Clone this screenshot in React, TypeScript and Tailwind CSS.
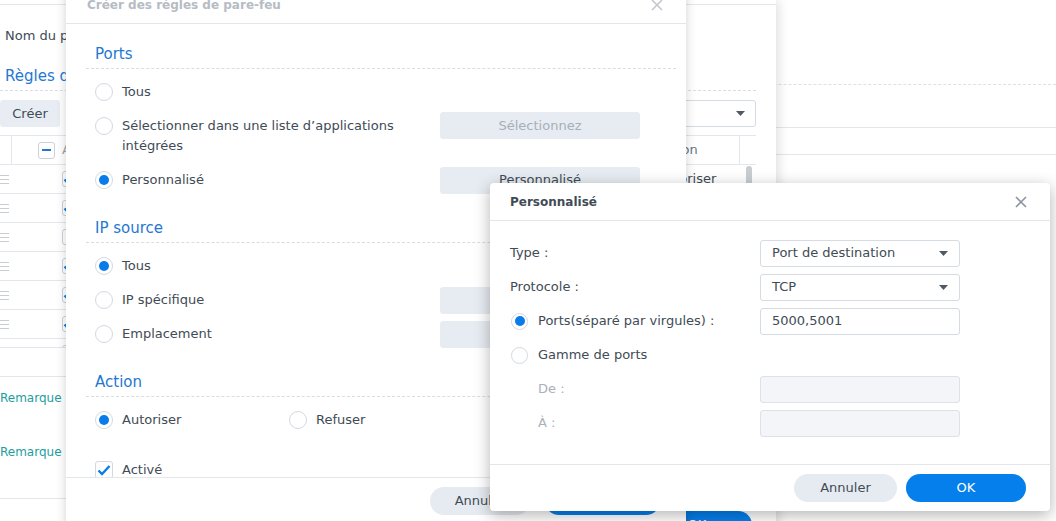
import React from 'react';

const Radio = ({ checked, small }: { checked?: boolean; small?: boolean }) => (
  <span
    className={`flex shrink-0 items-center justify-center rounded-full border border-[#d3d9e0] bg-white ${
      small ? 'w-[17px] h-[17px]' : 'w-[18px] h-[18px]'
    }`}
  >
    {checked && <span className="w-[10px] h-[10px] rounded-full bg-[#0a7ce9]" />}
  </span>
);

const CloseX = ({ color }: { color: string }) => (
  <svg width="12" height="12" viewBox="0 0 12 12">
    <path d="M1 1L11 11M11 1L1 11" stroke={color} strokeWidth="1.7" />
  </svg>
);

const Caret = () => (
  <svg width="9" height="5" viewBox="0 0 9 5">
    <path d="M0 0H9L4.5 5Z" fill="#505a66" />
  </svg>
);

const Check = () => (
  <svg width="14" height="12" viewBox="0 0 14 12">
    <path d="M1.5 6.5L5 10L12.5 2" fill="none" stroke="#0a7ce9" strokeWidth="2.4" />
  </svg>
);

const DragHandle = () => (
  <span className="flex w-[9px] flex-col gap-[3px]">
    <span className="h-px bg-[#c8cdd3]" />
    <span className="h-px bg-[#c8cdd3]" />
    <span className="h-px bg-[#c8cdd3]" />
  </span>
);

// page behind all the windows
const Page = () => (
  <div className="absolute inset-0">
    <div className="h-[85px] border-b border-dashed border-[#dde1e6]" />
    <div className="h-[43px] border-b border-[#e3e6ea]" />
    <div className="h-[27px] border-b border-[#e3e6ea]" />
  </div>
);

const rows = [true, true, false, true, true, true, true];

// firewall profile window (furthest back)
const ProfileDialog = () => (
  <div className="absolute left-[-20px] top-0 h-[580px] w-[796px] bg-white shadow-[3px_0_10px_rgba(0,0,0,0.12)]">
    <div className="h-[5px] border-b border-[#e3e6ea]" />
    <div className="px-[20px]">
      <div className="mt-[21px] pl-[5px] leading-[20px]">Nom du profil</div>
      <div className="mt-[18px] h-[27px] border-b border-dashed border-[#d8dde3] pl-[5px] text-[15px] leading-[24px] text-[#1f78d1]">
        Règles de pare-feu
      </div>
      <div className="mt-[9px] flex h-[27px] justify-between">
        <button className="w-[60px] rounded-[3px] bg-[#e8edf3]">Créer</button>
        <div className="flex w-[220px] items-center justify-end rounded-[3px] border border-[#d5dbe2] pr-[10px]">
          <Caret />
        </div>
      </div>
      <div className="mt-[8px] border-t border-[#e3e6ea]">
        <div className="flex h-[29px] items-center border-b border-[#e3e6ea]">
          <div className="h-full w-[12px] border-r border-[#e3e6ea]" />
          <span className="ml-[26px] flex h-[17px] w-[17px] items-center justify-center rounded-[3px] border border-[#c9d1da] bg-white">
            <span className="h-[2px] w-[9px] bg-[#1f78d1]" />
          </span>
          <span className="ml-[7px] text-[#9aa3ad]">Activé</span>
          <div className="flex-1" />
          <div className="w-[82px] text-[#6b7580]">Action</div>
          <div className="h-full w-[17px] border-l border-[#e3e6ea]" />
        </div>
        <div className="relative h-[183px] overflow-hidden border-b border-[#e3e6ea]">
          {rows.map((on, i) => (
            <div key={i} className="flex h-[29px] items-center border-b border-[#e3e6ea]">
              <DragHandle />
              <span className="ml-[53px] flex h-[16px] w-[16px] items-center justify-center rounded-[3px] border border-[#c9d1da] bg-white">
                {on && <Check />}
              </span>
              <div className="flex-1" />
              <div className="w-[99px]">{i === 0 ? 'Autoriser' : ''}</div>
            </div>
          ))}
          <div className="absolute right-[4px] top-[1px] h-[26px] w-[6px] rounded-full bg-[#c9cdd2]" />
        </div>
        <div className="h-[29px] border-b border-[#e3e6ea]" />
      </div>
      <div className="border-b border-[#e3e6ea] pb-[38px] pt-[13px] text-[12px] leading-[16px] text-[#1d9e9c]">
        <div>Remarque</div>
        <div className="mt-[38px]">Remarque</div>
      </div>
      <div className="mt-[12px] flex justify-end pr-[4px]">
        <button className="h-[28px] w-[110px] rounded-full bg-[#057feb] text-white">OK</button>
      </div>
    </div>
  </div>
);

const Heading = ({ children, first }: { children: React.ReactNode; first?: boolean }) => (
  <div
    className={`flex h-[30px] items-center border-b border-dashed border-[#d8dde3] pl-[9px] pt-[2px] text-[15px] text-[#1f78d1] ${
      first ? 'mt-[15px]' : 'mt-[16px]'
    }`}
  >
    {children}
  </div>
);

const Field = ({ label, checked, button, muted }: { label: string; checked?: boolean; button?: string; muted?: boolean }) => (
  <div className="flex h-[34px] items-center pl-[9px]">
    <div className="flex w-[345px] items-center gap-[9px]">
      <Radio checked={checked} />
      <span>{label}</span>
    </div>
    {button !== undefined && (
      <div
        className={`flex h-[27px] w-[200px] items-center justify-center rounded-[3px] bg-[#e7ecf2] ${
          muted ? 'text-[#a6afb9]' : 'text-[#414b55]'
        }`}
      >
        {button}
      </div>
    )}
  </div>
);

// "Créer des règles de pare-feu"
const RuleDialog = () => (
  <div className="absolute left-[66px] top-[-16px] h-[580px] w-[620px] bg-white shadow-[0_0_10px_rgba(0,0,0,0.18)]">
    <div className="flex h-[40px] items-center justify-between border-b border-[#e3e6ea] pl-[21px] pr-[23px] pt-[2px]">
      <span className="text-[12px] font-bold text-[#b5bcc4]">Créer des règles de pare-feu</span>
      <CloseX color="#c3c9cf" />
    </div>
    <div className="h-[453px] overflow-hidden pl-[20px] pr-[10px]">
      <Heading first>Ports</Heading>
      <div className="mt-[6px]">
        <Field label="Tous" />
        <div className="flex h-[54px] items-start pl-[9px] pt-[3px]">
          <div className="flex w-[345px] items-start gap-[9px] pt-[4px]">
            <span className="pt-[1px]">
              <Radio />
            </span>
            <span className="leading-[20px]">
              Sélectionner dans une liste d’applications
              <br />
              intégrées
            </span>
          </div>
          <div className="flex h-[27px] w-[200px] items-center justify-center rounded-[3px] bg-[#e7ecf2] text-[#a6afb9]">
            Sélectionnez
          </div>
        </div>
        <Field label="Personnalisé" checked button="Personnalisé" />
      </div>
      <Heading>IP source</Heading>
      <div className="mt-[6px]">
        <Field label="Tous" checked />
        <Field label="IP spécifique" button="" muted />
        <Field label="Emplacement" button="" muted />
      </div>
      <Heading>Action</Heading>
      <div className="mt-[6px] flex h-[34px] items-center pl-[9px]">
        <div className="flex w-[194px] items-center gap-[9px]">
          <Radio checked />
          <span>Autoriser</span>
        </div>
        <div className="flex items-center gap-[9px]">
          <Radio />
          <span>Refuser</span>
        </div>
      </div>
      <div className="mt-[16px] flex h-[34px] items-center gap-[9px] pl-[9px]">
        <span className="flex h-[18px] w-[18px] items-center justify-center rounded-[3px] border border-[#d3d9e0] bg-white">
          <Check />
        </span>
        <span>Activé</span>
      </div>
    </div>
    <div className="flex justify-end gap-[15px] border-t border-[#e3e6ea] pr-[26px] pt-[9px]">
      <button className="h-[28px] w-[100px] rounded-full bg-[#e6ebf1]">Annuler</button>
      <button className="h-[28px] w-[115px] rounded-full bg-[#057feb] text-white">OK</button>
    </div>
  </div>
);

const Row = ({ children }: { children: React.ReactNode }) => <div className="flex h-[34px] items-center">{children}</div>;

// "Personnalisé" port dialog (front)
const CustomDialog = () => (
  <div className="absolute left-[490px] top-[183px] h-[328px] w-[560px] rounded-[4px] bg-white shadow-[0_4px_16px_rgba(0,0,0,0.3)]">
    <div className="flex h-[38px] items-center justify-between border-b border-[#e3e6ea] pl-[20px] pr-[23px]">
      <span className="text-[12px] font-bold text-[#414b55]">Personnalisé</span>
      <CloseX color="#8e97a1" />
    </div>
    <div className="h-[243px] pl-[20px] pt-[15px]">
      <Row>
        <div className="w-[250px]">Type :</div>
        <div className="flex h-[27px] w-[200px] items-center justify-between rounded-[3px] border border-[#d5dbe2] pl-[11px] pr-[11px]">
          <span>Port de destination</span>
          <Caret />
        </div>
      </Row>
      <Row>
        <div className="w-[250px]">Protocole :</div>
        <div className="flex h-[27px] w-[200px] items-center justify-between rounded-[3px] border border-[#d5dbe2] pl-[11px] pr-[11px]">
          <span>TCP</span>
          <Caret />
        </div>
      </Row>
      <Row>
        <div className="flex w-[250px] items-center gap-[10px] pl-[1px]">
          <Radio checked small />
          <span>Ports(séparé par virgules) :</span>
        </div>
        <div className="flex h-[27px] w-[200px] items-center rounded-[3px] border border-[#d5dbe2] pl-[11px]">5000,5001</div>
      </Row>
      <Row>
        <div className="flex w-[250px] items-center gap-[10px] pl-[1px]">
          <Radio small />
          <span>Gamme de ports</span>
        </div>
      </Row>
      <Row>
        <div className="w-[250px] pl-[28px] text-[#a9b1ba]">De :</div>
        <div className="h-[27px] w-[200px] rounded-[3px] border border-[#dde2e8] bg-[#f3f5f8]" />
      </Row>
      <Row>
        <div className="w-[250px] pl-[28px] text-[#a9b1ba]">À :</div>
        <div className="h-[27px] w-[200px] rounded-[3px] border border-[#dde2e8] bg-[#f3f5f8]" />
      </Row>
    </div>
    <div className="flex justify-end gap-[9px] border-t border-[#e3e6ea] pr-[24px] pt-[9px]">
      <button className="h-[28px] w-[103px] rounded-full bg-[#e6ebf1]">Annuler</button>
      <button className="h-[28px] w-[120px] rounded-full bg-[#057feb] text-white">OK</button>
    </div>
  </div>
);

export default function App() {
  return (
    <div className="relative h-[521px] w-[1056px] overflow-hidden bg-white font-['DejaVu_Sans',Verdana,sans-serif] text-[13px] text-[#414b55]">
      <Page />
      <ProfileDialog />
      <RuleDialog />
      <CustomDialog />
    </div>
  );
}
